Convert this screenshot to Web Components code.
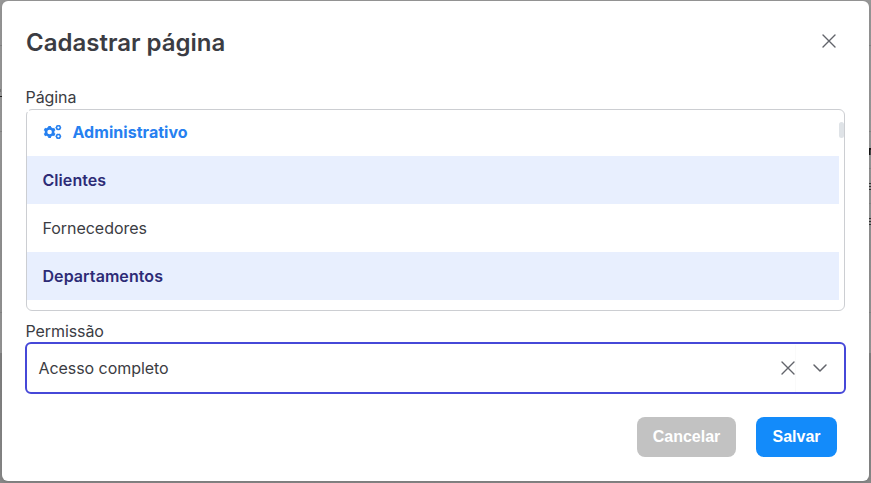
<!DOCTYPE html>
<html lang="pt-BR">
<head>
<meta charset="utf-8">
<title>Cadastrar página</title>
<style>
html,body{margin:0;height:100%;overflow:hidden}
body{font-family:Inter,"Liberation Sans",sans-serif;font-size:16px;color:#3b3c43}
</style>
</head>
<body>
<page-backdrop>
  <modal-dialog>
    <span slot="title">Cadastrar página</span>
    <form-field><span slot="label">Página</span>
      <page-list>
        <list-row kind="group">Administrativo</list-row>
        <list-row kind="selected">Clientes</list-row>
        <list-row>Fornecedores</list-row>
        <list-row kind="selected">Departamentos</list-row>
      </page-list>
    </form-field>
    <form-field class="second"><span slot="label">Permissão</span>
      <select-box>Acesso completo</select-box>
    </form-field>
    <action-button slot="actions" kind="muted">Cancelar</action-button>
    <action-button slot="actions">Salvar</action-button>
  </modal-dialog>
</page-backdrop>
<script>
function define(name, html) {
  const t = document.createElement('template');
  t.innerHTML = html;
  customElements.define(name, class extends HTMLElement {
    constructor() {
      super();
      this.attachShadow({mode: 'open'}).appendChild(t.content.cloneNode(true));
    }
  });
}

define('page-backdrop', `
<style>
:host{display:block;box-sizing:border-box;height:100%;padding:1px 2px 2px;position:relative;
 background:linear-gradient(#979797 0,#999 130px,#909090 250px,#969696 353px,#808080 353px,#888 100%)}
svg{position:absolute;inset:0;width:100%;height:100%}
::slotted(*){position:relative}
</style>
<svg viewBox="0 0 871 483" aria-hidden="true">
 <path d="M0 45.5H871M0 131.5H871M0 312.5H871M860 168.5H871M860 203.5H871" stroke="#858585"/>
 <path d="M0 96.5H2" stroke="#222"/><path d="M0 89V92" stroke="#555"/>
 <path d="M869.7 148V155M869 148.8H871" stroke="#111" stroke-width="1.8"/>
 <path d="M869 183.5H871M869 186.5H871M869 189.5H871M869 218.5H871M869 221.5H871M869 224.5H871" stroke="#333"/>
</svg>
<slot></slot>`);

define('modal-dialog', `
<style>
:host{display:flex;flex-direction:column;box-sizing:border-box;height:480px;background:#fff;border-radius:6px;padding:24px;box-shadow:0 1px 4px rgba(0,0,0,.12)}
header{display:flex;justify-content:space-between;align-items:center;height:32px;padding-right:8px;margin-bottom:32px}
h1{margin:3px 0 0;font-size:24px;line-height:32px;font-weight:600}
footer{display:flex;justify-content:flex-end;gap:20px;padding:23px 8px 0 0}
</style>
<header><h1><slot name="title"></slot></h1>
<svg width="16" height="16" viewBox="0 0 16 16"><path d="M2 2L14 14M14 2L2 14" stroke="#62646b" stroke-width="1.4" stroke-linecap="round"/></svg></header>
<slot></slot>
<footer><slot name="actions"></slot></footer>`);

define('form-field', `
<style>
:host{display:block}
:host(.second){margin-top:11px}
.label{height:20px;line-height:18px;letter-spacing:-.08px;text-indent:-.5px}
:host(:not(.second)) .label{line-height:16px}
</style>
<div class="label"><slot name="label"></slot></div><slot></slot>`);

define('page-list', `
<style>
:host{display:block;box-sizing:border-box;width:819px;height:202px;border:1px solid #ccced2;border-radius:6px;position:relative;padding-right:5px}
.thumb{position:absolute;right:0;top:12px;width:5px;height:16px;border-radius:3px;background:#dfe3e7}
.gap{position:absolute;left:-1px;top:-1px;width:3px;height:3px;background:#fff}
.in{margin-top:-2px}
</style>
<div class="in"><slot></slot></div><div class="thumb"></div><div class="gap"></div>`);

define('list-row', `
<style>
:host{display:flex;align-items:center;box-sizing:border-box;height:48px;padding:0 15.5px;letter-spacing:-.04px}
svg{display:none;margin-right:10px}
:host([kind=group]){color:#2680f0;font-weight:700;letter-spacing:.04px}
:host([kind=group]) svg{display:block}
:host([kind=selected]){background:#e8effe;color:#2d2b76;font-weight:600;letter-spacing:.07px}
</style>
<svg width="20" height="16" viewBox="0 0 20 16" fill="none" stroke="currentColor">
 <circle cx="6.6" cy="8" r="3.6" stroke-width="2.6"/>
 <g stroke-width="2.7"><path d="M6.6 2V4M6.6 12V14M1.4 5L3.1 6M10.1 10L11.8 11M1.4 11L3.1 10M10.1 6L11.8 5"/></g>
 <circle cx="15.4" cy="3.6" r="1.9" stroke-width="1.5"/>
 <path d="M12.6 3.6H13.4M17.4 3.6H18.2M14 1.2L14.4 1.9M16.4 5.3L16.8 6M14 6L14.4 5.3M16.4 1.9L16.8 1.2" stroke-width="1.3"/>
 <circle cx="15.4" cy="12.3" r="1.9" stroke-width="1.5"/>
 <path d="M12.6 12.3H13.4M17.4 12.3H18.2M14 9.9L14.4 10.6M16.4 14L16.8 14.7M14 14.7L14.4 14M16.4 10.6L16.8 9.9" stroke-width="1.3"/>
</svg>
<slot></slot>`);

define('select-box', `
<style>
:host{display:flex;align-items:center;box-sizing:border-box;width:821px;height:52px;margin-left:-1px;border:2px solid #4648d8;border-radius:6px;padding:0 16px 0 11.5px;letter-spacing:-.06px}
.text{flex:1}
.clear{box-sizing:border-box;width:16px;height:47px;border-right:1px solid #fafafa;display:flex;align-items:center;margin-right:16px}
.clear svg{flex:none}
</style>
<span class="text"><slot></slot></span>
<span class="clear"><svg width="16" height="16" viewBox="0 0 16 16"><path d="M2 2L14 14M14 2L2 14" stroke="#62646b" stroke-width="1.4" stroke-linecap="round"/></svg></span>
<svg width="16" height="16" viewBox="0 0 16 16" fill="none"><path d="M2 5L8 11L14 5" stroke="#62646b" stroke-width="1.5" stroke-linecap="round" stroke-linejoin="round"/></svg>`);

define('action-button', `
<style>
:host{display:flex;align-items:center;justify-content:center;box-sizing:border-box;width:81px;height:40px;border-radius:8px;background:#138bfa;color:#fff;font:700 16px/40px "Liberation Sans",Arial,sans-serif}
:host([kind=muted]){width:99px;background:#c2c2c2}
</style>
<slot></slot>`);
</script>
</body>
</html>
